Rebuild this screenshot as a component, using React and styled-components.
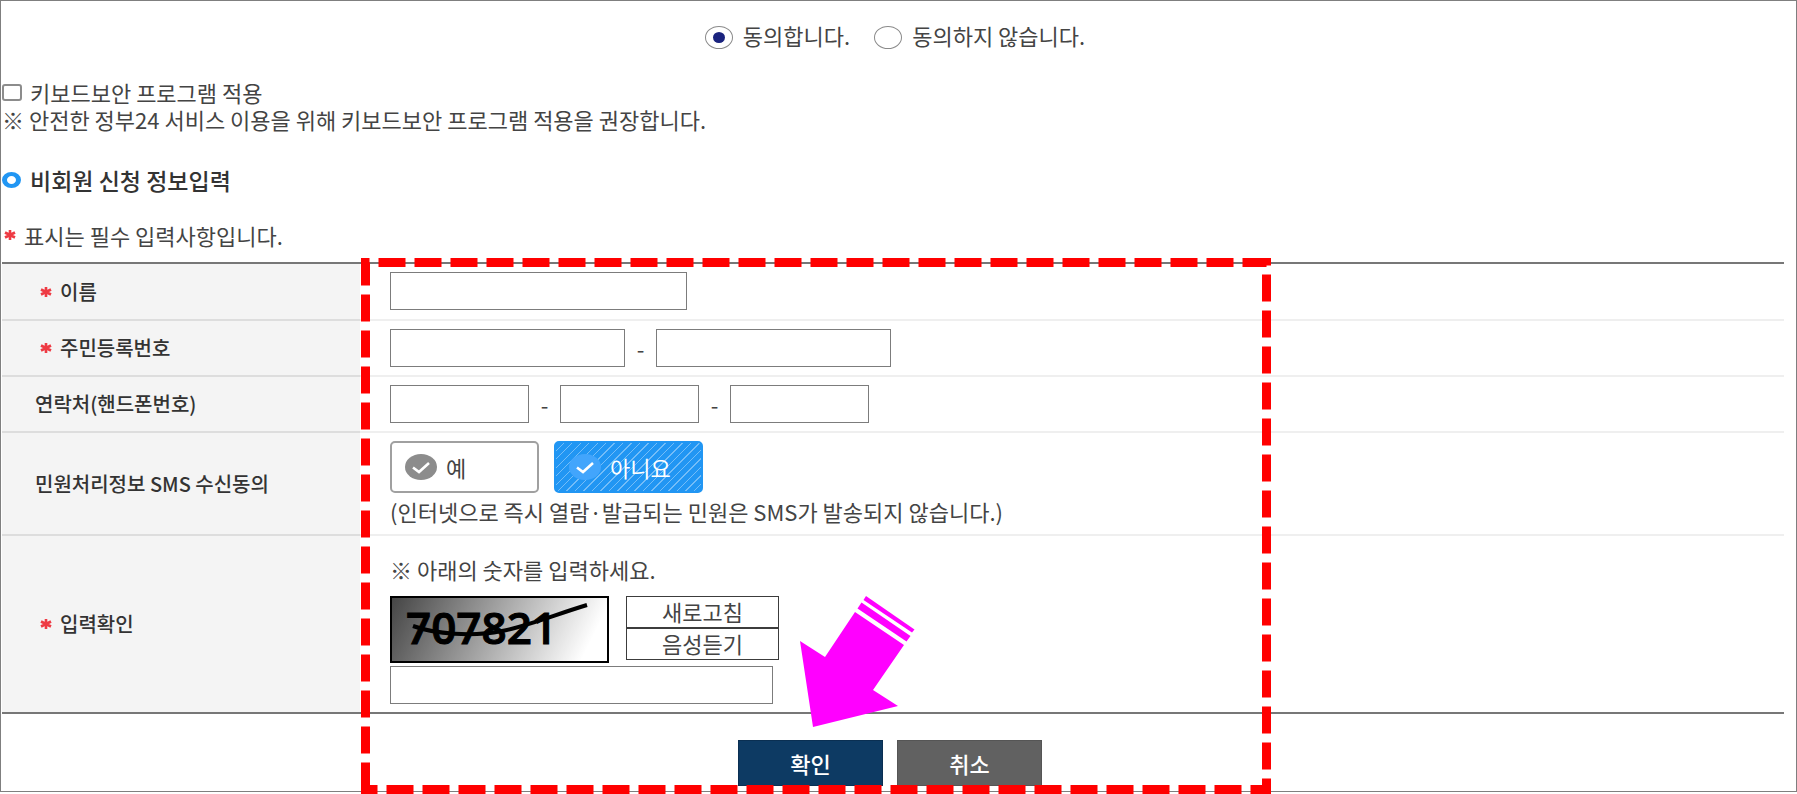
import React, { useState } from 'react';
import styled, { createGlobalStyle } from 'styled-components';

const GlobalStyle = createGlobalStyle`
  * {
    box-sizing: border-box;
  }

  body {
    margin: 0;
    background: #fff;
    color: #444;
    font-family: 'Noto Sans CJK KR', sans-serif;
    font-size: 22px;
    line-height: 26px;
  }

  input,
  button {
    margin: 0;
    font-family: inherit;
    font-size: inherit;
  }
`;

const Page = styled.div`
  position: relative;
  border: 1px solid #7f7f7f;
  padding: 0 12px 5px 1px;
  margin-bottom: 2px;
`;

const AgreeRow = styled.div`
  display: flex;
  justify-content: center;
  gap: 24px;
  padding: 25px 0 0 4px;
  line-height: 18px;
`;

const AgreeLabel = styled.label`
  display: flex;
  align-items: flex-start;
  gap: 10px;
`;

const AgreeRadio = styled.input`
  appearance: none;
  display: grid;
  place-items: center;
  width: 28px;
  height: 23px;
  border: 1px solid #8a8a8a;
  border-radius: 50%;
  background: #fff;

  &:checked::before {
    content: '';
    width: 12px;
    height: 11px;
    border-radius: 50%;
    background: #1a237e;
  }
`;

const Security = styled.div`
  padding-top: 30px;
`;

const SecurityLabel = styled.label`
  display: flex;
  align-items: center;
  gap: 8px;
  padding-bottom: 1px;
`;

const Checkbox = styled.input`
  appearance: none;
  width: 20px;
  height: 17px;
  border: 2px solid #8c8c8c;
  border-radius: 3px;
  background: #fff;

  &:checked {
    background: #2196f3;
  }
`;

const Paragraph = styled.p`
  margin: 0;
`;

const Heading = styled.h2`
  display: flex;
  align-items: center;
  gap: 9px;
  margin: 0;
  padding-top: 34px;
  color: #333;
  font-size: 23px;
  font-weight: 500;
  line-height: 28px;
`;

const Bullet = styled.span`
  width: 19px;
  height: 16px;
  border: 4px solid #2196f3;
  border-width: 4px 5px;
  border-radius: 50%;
`;

const RequiredNote = styled.p`
  display: flex;
  align-items: center;
  gap: 8px;
  margin: 0;
  padding: 28px 0 14px 2px;
`;

const Table = styled.table`
  width: 100%;
  border-collapse: separate;
  border-spacing: 0;
  border-top: 2px solid #777;
  border-bottom: 2px solid #777;
`;

const HeadCell = styled.th`
  width: 358px;
  padding: 0 0 0 ${(props) => (props.$required ? 38 : 33)}px;
  border-bottom: 2px solid #ddd;
  background: #f4f4f4;
  color: #333;
  font-size: 20px;
  font-weight: 500;
  text-align: left;

  tr:last-child > & {
    border-bottom: 0;
  }
`;

const HeadLabel = styled.span`
  display: flex;
  align-items: center;
  gap: 8px;
`;

const Cell = styled.td`
  padding: ${(props) => props.$pad || '8px 0 8px 30px'};
  border-bottom: 2px solid #efefef;

  tr:last-child > & {
    border-bottom: 0;
  }
`;

const Fields = styled.div`
  display: flex;
  align-items: center;
`;

const TextInput = styled.input`
  display: block;
  width: ${(props) => props.$width}px;
  height: 38px;
  padding: 0 8px;
  border: 1px solid #7c7c7c;
  border-radius: 0;
  background: #fff;
  color: #444;
`;

const Hyphen = styled.span`
  width: 31px;
  text-align: center;
`;

const Choices = styled.div`
  display: flex;
  gap: 15px;
`;

const Choice = styled.label`
  display: flex;
  align-items: center;
  gap: 9px;
  width: 149px;
  height: 52px;
  padding: 0 0 0 13px;
  border: 2px solid ${(props) => (props.$active ? '#2196f3' : '#a0a0a0')};
  border-radius: 5px;
  background: ${(props) =>
    props.$active
      ? 'repeating-linear-gradient(135deg, #2196f3 0 5px, #74bdf8 5px 6px)'
      : '#fff'};
  color: ${(props) => (props.$active ? '#fff' : '#444')};
`;

const ChoiceMark = styled.span`
  display: grid;
  width: 32px;
  height: 26px;

  > * {
    grid-area: 1 / 1;
  }
`;

const ChoiceRadio = styled.input`
  appearance: none;
  width: 32px;
  height: 26px;
  border-radius: 50%;
  background: #8c8c8c;

  &:checked {
    background: #42a5fc;
  }
`;

const ChoiceNote = styled.p`
  margin: 0;
  padding: 5px 0 2px;
`;

const CaptchaRow = styled.div`
  display: flex;
  align-items: flex-start;
  gap: 17px;
  padding: 14px 0 3px;
`;

const CaptchaImage = styled.svg`
  display: block;
  width: 219px;
  height: 67px;
`;

const CaptchaButtons = styled.div`
  display: flex;
  flex-direction: column;
`;

const SmallButton = styled.button`
  width: 153px;
  height: 32px;
  padding: 0 0 2px;
  border: 1px solid #3c3c3c;
  background: #fff;
  color: #444;
  line-height: 26px;
`;

const Actions = styled.div`
  display: flex;
  justify-content: center;
  gap: 14px;
  padding: 26px 6px 0 0;
`;

const ActionButton = styled.button`
  width: 145px;
  height: 46px;
  padding: 0;
  border: 1px solid ${(props) => (props.$primary ? '#0a2f52' : '#555')};
  background: ${(props) => (props.$primary ? '#0d3a63' : '#616161')};
  color: #fff;
  font-weight: 500;
`;

const Guide = styled.svg`
  position: absolute;
  top: -1px;
  left: -1px;
  width: 1280px;
  height: 794px;
  pointer-events: none;
`;

function Star() {
  return (
    <svg width="12" height="12" viewBox="0 0 12 12" aria-hidden="true">
      <path d="M6 1v10M1 3.5l10 5M11 3.5l-10 5" stroke="#ee3a43" strokeWidth="2.6" />
    </svg>
  );
}

function ChoiceOption({ value, current, onChange, children }) {
  return (
    <Choice $active={current === value}>
      <ChoiceMark>
        <ChoiceRadio
          type="radio"
          name="sms"
          value={value}
          checked={current === value}
          onChange={() => onChange(value)}
        />
        <svg width="32" height="26" viewBox="0 0 32 26" aria-hidden="true">
          <path d="M8 13.5l6 4.5 10-9" fill="none" stroke="#fff" strokeWidth="2.6" />
        </svg>
      </ChoiceMark>
      {children}
    </Choice>
  );
}

function Captcha() {
  return (
    <CaptchaImage viewBox="0 0 219 67" role="img" aria-label="707821">
      <defs>
        <linearGradient id="shade" x1="0" y1="0" x2="1" y2="0.15">
          <stop offset="0" stopColor="#444" />
          <stop offset="1" stopColor="#fff" />
        </linearGradient>
      </defs>
      <rect x="1" y="1" width="217" height="65" fill="url(#shade)" stroke="#000" strokeWidth="2" />
      <text x="16" y="48" fontFamily="'Open Sans', sans-serif" fontSize="44" fontWeight="600" stroke="#000">
        707821
      </text>
      <path d="M23 30C45 38 82 41 112 35C138 30 164 19 197 9" fill="none" stroke="#000" strokeWidth="4" />
    </CaptchaImage>
  );
}

function App() {
  const [agree, setAgree] = useState('yes');
  const [sms, setSms] = useState('no');

  return (
    <Page>
      <GlobalStyle />
      <form onSubmit={(e) => e.preventDefault()}>
        <AgreeRow>
          <AgreeLabel>
            <AgreeRadio type="radio" name="agree" checked={agree === 'yes'} onChange={() => setAgree('yes')} />
            동의합니다.
          </AgreeLabel>
          <AgreeLabel>
            <AgreeRadio type="radio" name="agree" checked={agree === 'no'} onChange={() => setAgree('no')} />
            동의하지 않습니다.
          </AgreeLabel>
        </AgreeRow>

        <Security>
          <SecurityLabel>
            <Checkbox type="checkbox" />
            키보드보안 프로그램 적용
          </SecurityLabel>
          <Paragraph>※ 안전한 정부24 서비스 이용을 위해 키보드보안 프로그램 적용을 권장합니다.</Paragraph>
        </Security>

        <Heading>
          <Bullet />
          비회원 신청 정보입력
        </Heading>
        <RequiredNote>
          <Star />
          표시는 필수 입력사항입니다.
        </RequiredNote>

        <Table>
          <tbody>
            <tr>
              <HeadCell scope="row" $required>
                <HeadLabel>
                  <Star />
                  <label htmlFor="name">이름</label>
                </HeadLabel>
              </HeadCell>
              <Cell $pad="8px 0 9px 30px">
                <TextInput id="name" type="text" $width={297} />
              </Cell>
            </tr>
            <tr>
              <HeadCell scope="row" $required>
                <HeadLabel>
                  <Star />
                  <label htmlFor="rrn">주민등록번호</label>
                </HeadLabel>
              </HeadCell>
              <Cell>
                <Fields>
                  <TextInput id="rrn" type="text" $width={235} />
                  <Hyphen>-</Hyphen>
                  <TextInput type="password" aria-label="주민등록번호 뒷자리" $width={235} />
                </Fields>
              </Cell>
            </tr>
            <tr>
              <HeadCell scope="row">
                <label htmlFor="phone">연락처(핸드폰번호)</label>
              </HeadCell>
              <Cell>
                <Fields>
                  <TextInput id="phone" type="text" $width={139} />
                  <Hyphen>-</Hyphen>
                  <TextInput type="text" aria-label="연락처 가운데 자리" $width={139} />
                  <Hyphen>-</Hyphen>
                  <TextInput type="text" aria-label="연락처 끝자리" $width={139} />
                </Fields>
              </Cell>
            </tr>
            <tr>
              <HeadCell scope="row">민원처리정보 SMS 수신동의</HeadCell>
              <Cell>
                <Choices>
                  <ChoiceOption value="yes" current={sms} onChange={setSms}>
                    예
                  </ChoiceOption>
                  <ChoiceOption value="no" current={sms} onChange={setSms}>
                    아니요
                  </ChoiceOption>
                </Choices>
                <ChoiceNote>(인터넷으로 즉시 열람·발급되는 민원은 SMS가 발송되지 않습니다.)</ChoiceNote>
              </Cell>
            </tr>
            <tr>
              <HeadCell scope="row" $required>
                <HeadLabel>
                  <Star />
                  <label htmlFor="captcha">입력확인</label>
                </HeadLabel>
              </HeadCell>
              <Cell $pad="20px 0 8px 30px">
                <Paragraph>※ 아래의 숫자를 입력하세요.</Paragraph>
                <CaptchaRow>
                  <Captcha />
                  <CaptchaButtons>
                    <SmallButton type="button">새로고침</SmallButton>
                    <SmallButton type="button">음성듣기</SmallButton>
                  </CaptchaButtons>
                </CaptchaRow>
                <TextInput id="captcha" type="text" $width={383} />
              </Cell>
            </tr>
          </tbody>
        </Table>

        <Actions>
          <ActionButton type="submit" $primary>
            확인
          </ActionButton>
          <ActionButton type="button">취소</ActionButton>
        </Actions>
      </form>

      {/* dashed frame round the fields and the arrow to the confirm button */}
      <Guide viewBox="0 0 1280 794" aria-hidden="true">
        <path
          d="M365.5 789.5V262.5H1266.5V789.5Z"
          fill="none"
          stroke="#f00"
          strokeWidth="9"
          strokeDasharray="27 9"
        />
        <g fill="#f0f">
          <path d="M813 727L800 641L825 657L855 612L904 645L873 690L898 706Z" />
          <path d="M861.5 602.5L910.5 636L906.5 641.5L857.5 608.5Z" />
          <path d="M866 596L914.5 629.5L912 632.5L863.5 600Z" />
        </g>
      </Guide>
    </Page>
  );
}

export default App;
